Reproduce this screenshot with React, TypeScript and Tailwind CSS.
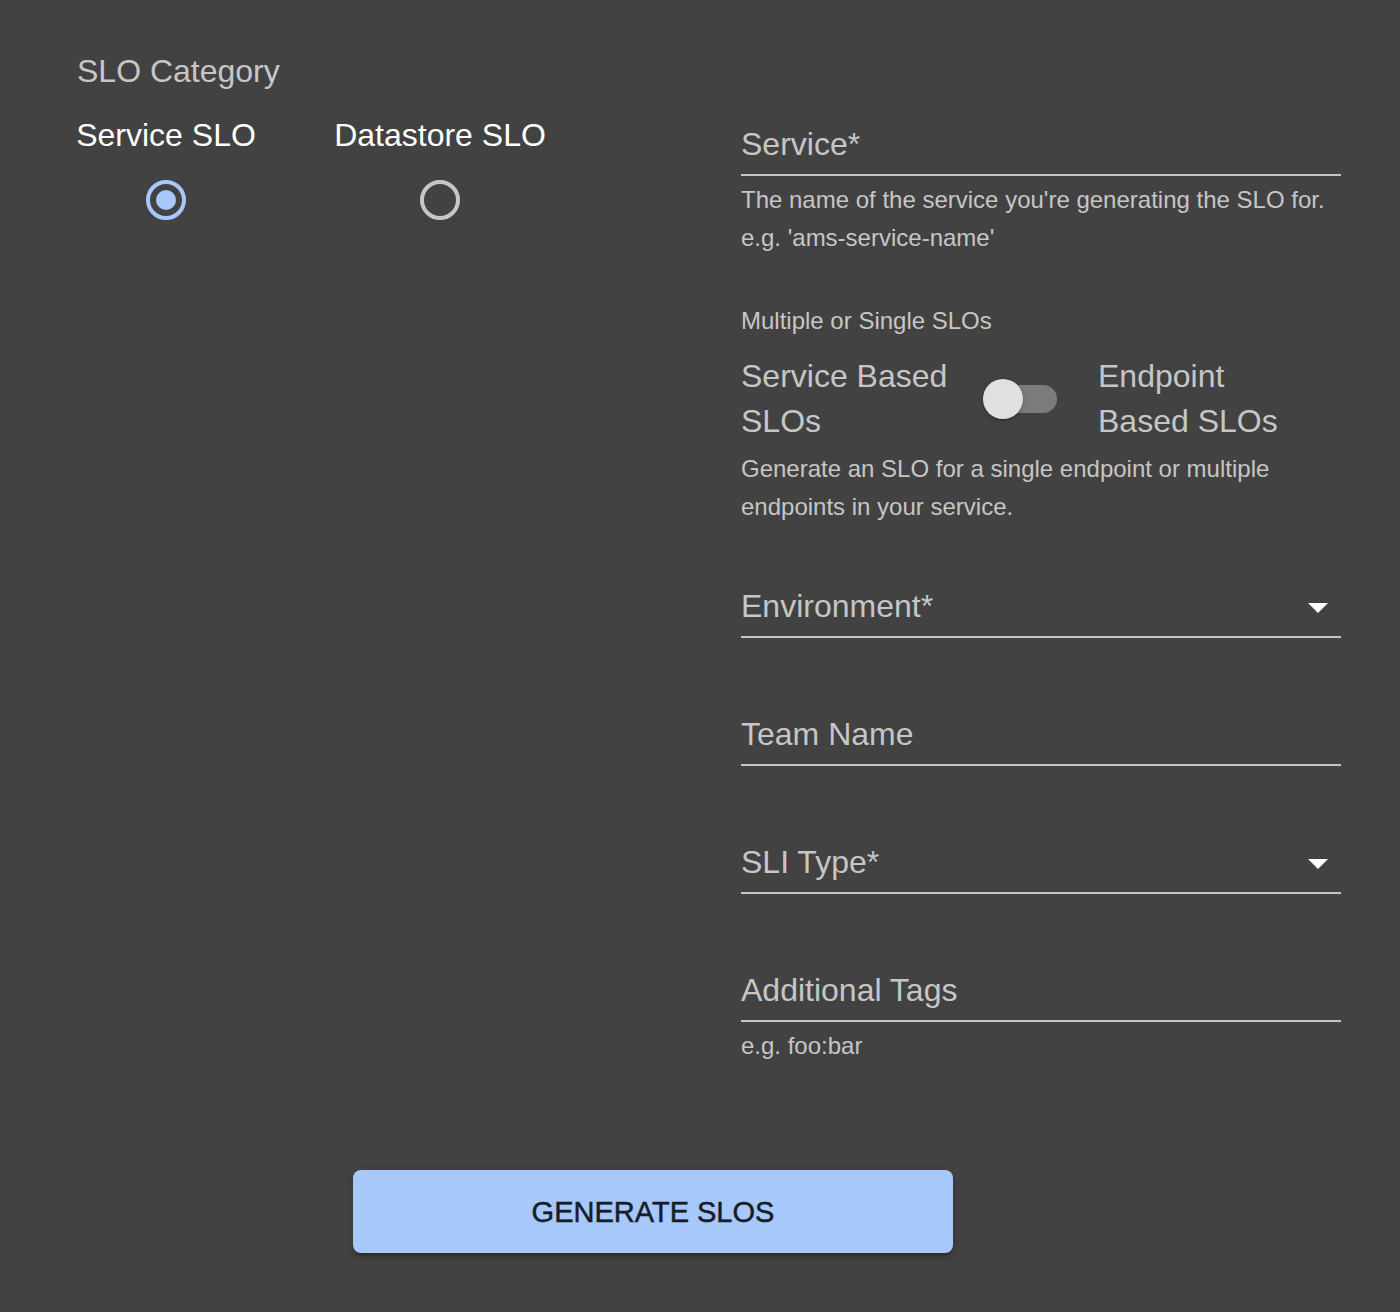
import React from "react";

const Field = ({ label, select, className = "" }: { label: string; select?: boolean; className?: string }) => (
  <div className={`flex items-center justify-between pb-[11px] border-b-2 border-[#c6c6c6] ${className}`}>
    <span className="text-[32px] leading-[38px] text-[#c6c6c6]">{label}</span>
    {select && (
      <svg width="20" height="10" viewBox="0 0 20 10" className="mr-[13px] mt-[4px]">
        <path d="M0 0 L20 0 L10 10 Z" fill="#ffffff" />
      </svg>
    )}
  </div>
);

export default function App() {
  return (
    <div
      className="w-[1400px] h-[1312px] bg-[#424242] flex flex-col"
      style={{ fontFamily: '"Liberation Sans", Arial, sans-serif' }}
    >
      <div className="flex">
        {/* Left column */}
        <div className="w-[741px] pl-[77px] pt-[52px]">
          <div className="text-[32px] leading-[38px] text-[#c6c6c6]">SLO Category</div>
          <div className="flex mt-[26px]">
            <div className="w-[178px] flex flex-col items-center">
              <span className="text-[32px] leading-[38px] text-white whitespace-nowrap">Service SLO</span>
              <div className="mt-[26px] w-[40px] h-[40px] rounded-full border-[4px] border-[#a6c8fb] flex items-center justify-center">
                <div className="w-[20px] h-[20px] rounded-full bg-[#a6c8fb]" />
              </div>
            </div>
            <div className="ml-[80px] w-[210px] flex flex-col items-center">
              <span className="text-[32px] leading-[38px] text-white whitespace-nowrap">Datastore SLO</span>
              <div className="mt-[26px] w-[40px] h-[40px] rounded-full border-[4px] border-[#c6c6c6]" />
            </div>
          </div>
        </div>

        {/* Right column */}
        <div className="w-[600px] pt-[125px] flex flex-col">
          <Field label="Service*" />
          <div className="mt-[5px] text-[24px] leading-[38px] text-[#c6c6c6]">
            <div>The name of the service you're generating the SLO for.</div>
            <div>e.g. 'ams-service-name'</div>
          </div>

          <div className="mt-[45px] text-[24px] leading-[38px] text-[#c6c6c6]">Multiple or Single SLOs</div>

          <div className="mt-[14px] flex items-center">
            <div className="w-[224px] text-[32px] leading-[45px] text-[#c6c6c6]">Service Based SLOs</div>
            <div className="relative w-[116px] h-[76px] shrink-0">
              <div className="absolute left-[24px] top-[24px] w-[68px] h-[28px] rounded-full bg-[#7b7b7b]" />
              <div className="absolute left-[18px] top-[18px] w-[40px] h-[40px] rounded-full bg-[#e0e0e0] shadow-[0_2px_2px_-1px_rgba(0,0,0,0.2),0_1px_2px_0_rgba(0,0,0,0.14),0_1px_6px_0_rgba(0,0,0,0.12)]" />
            </div>
            <div className="ml-[17px] w-[200px] text-[32px] leading-[45px] text-[#c6c6c6]">Endpoint Based SLOs</div>
          </div>

          <div className="mt-[6px] text-[24px] leading-[38px] text-[#c6c6c6]">
            <div>Generate an SLO for a single endpoint or multiple</div>
            <div>endpoints in your service.</div>
          </div>

          <Field label="Environment*" select className="mt-[61px]" />
          <Field label="Team Name" className="mt-[77px]" />
          <Field label="SLI Type*" select className="mt-[77px]" />
          <Field label="Additional Tags" className="mt-[77px]" />
          <div className="mt-[5px] text-[24px] leading-[38px] text-[#c6c6c6]">e.g. foo:bar</div>
        </div>
      </div>

      <div className="pl-[353px] mt-[105px]">
        <button className="w-[600px] h-[83px] rounded-[8px] bg-[#a6c8fb] text-[#161d28] text-[29px] pt-[3px] [-webkit-text-stroke:0.5px_#161d28] flex items-center justify-center shadow-[0_6px_2px_-4px_rgba(0,0,0,0.2),0_4px_4px_0_rgba(0,0,0,0.14),0_2px_10px_0_rgba(0,0,0,0.12)]">
          GENERATE SLOS
        </button>
      </div>
    </div>
  );
}
